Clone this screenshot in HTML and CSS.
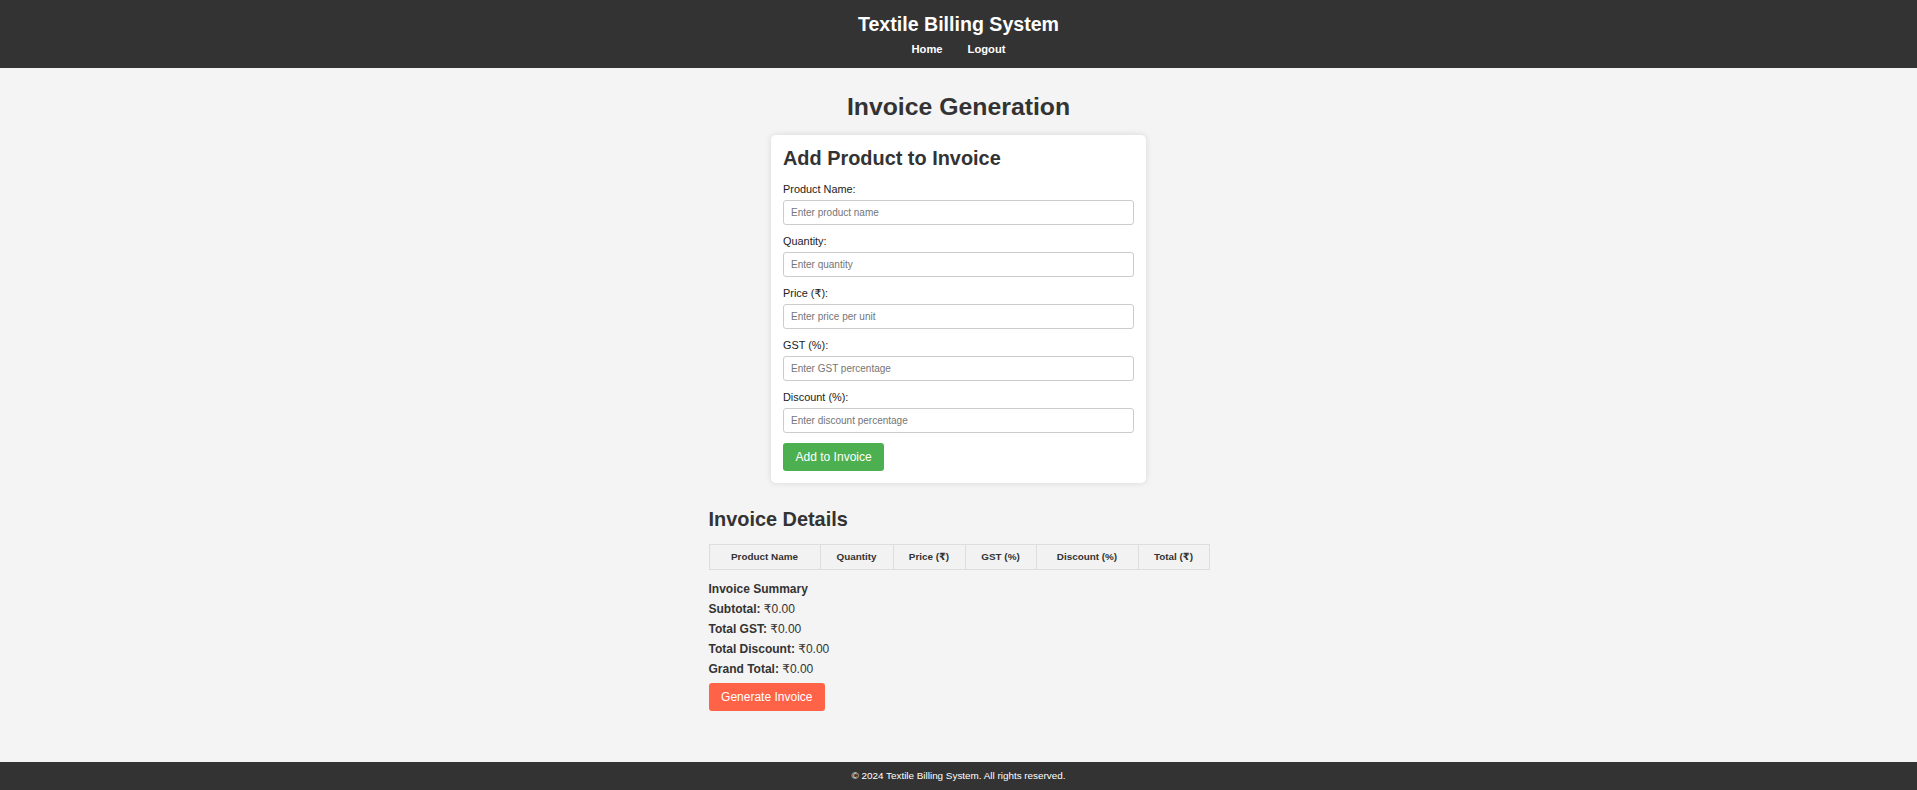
FILE: index.html
```html
<!DOCTYPE html>
<html lang="en">
<head>
<meta charset="UTF-8">
<title>Textile Billing System - Invoice</title>
<link rel="stylesheet" href="styles.css">
</head>
<body>
<header class="site-header">
  <h1 class="site-title">Textile Billing System</h1>
  <nav class="site-nav">
    <a href="#" class="nav-link">Home</a>
    <a href="#" class="nav-link">Logout</a>
  </nav>
</header>
<main class="main">
  <div class="container">
    <h1 class="page-title">Invoice Generation</h1>
    <div class="card">
      <h2 class="card-title">Add Product to Invoice</h2>
      <label class="field-label">Product Name:</label>
      <input class="field-input" type="text" placeholder="Enter product name">
      <label class="field-label">Quantity:</label>
      <input class="field-input" type="text" placeholder="Enter quantity">
      <label class="field-label">Price (₹):</label>
      <input class="field-input" type="text" placeholder="Enter price per unit">
      <label class="field-label">GST (%):</label>
      <input class="field-input" type="text" placeholder="Enter GST percentage">
      <label class="field-label">Discount (%):</label>
      <input class="field-input" type="text" placeholder="Enter discount percentage">
      <button class="btn btn-green">Add to Invoice</button>
    </div>

    <h2 class="section-title">Invoice Details</h2>
    <table class="invoice-table">
      <colgroup>
        <col class="col-name">
        <col class="col-qty">
        <col class="col-price">
        <col class="col-gst">
        <col class="col-disc">
        <col class="col-total">
      </colgroup>
      <thead>
        <tr>
          <th>Product Name</th>
          <th>Quantity</th>
          <th>Price (₹)</th>
          <th>GST (%)</th>
          <th>Discount (%)</th>
          <th>Total (₹)</th>
        </tr>
      </thead>
      <tbody></tbody>
    </table>

    <div class="summary">
      <div class="summary-title">Invoice Summary</div>
      <div class="summary-row"><strong>Subtotal:</strong> ₹0.00</div>
      <div class="summary-row"><strong>Total GST:</strong> ₹0.00</div>
      <div class="summary-row"><strong>Total Discount:</strong> ₹0.00</div>
      <div class="summary-row"><strong>Grand Total:</strong> ₹0.00</div>
      <button class="btn btn-tomato">Generate Invoice</button>
    </div>
  </div>
</main>
<footer class="site-footer">© 2024 Textile Billing System. All rights reserved.</footer>
</body>
</html>
```

FILE: styles.css
```css
* {
  box-sizing: border-box;
}

html, body {
  margin: 0;
  padding: 0;
}

body {
  font-family: "Liberation Sans", Arial, "DejaVu Sans", sans-serif;
  background: #f4f4f4;
  color: #333;
  min-height: 100vh;
  display: flex;
  flex-direction: column;
}

.site-header {
  background: #333;
  color: #fff;
  text-align: center;
  padding: 13px 0 12px;
  height: 68px;
}

.site-title {
  margin: 0;
  font-size: 19.6px;
  line-height: 23px;
  font-weight: bold;
}

.site-nav {
  margin-top: 7px;
  display: flex;
  justify-content: center;
  gap: 25px;
}

.nav-link {
  color: #fff;
  text-decoration: none;
  font-size: 11.2px;
  font-weight: bold;
  line-height: 13px;
}

.main {
  flex: 1;
}

.container {
  width: 500px;
  margin: 0 auto;
}

.page-title {
  text-align: center;
  margin: 24px 0 14px;
  font-size: 24.8px;
  line-height: 29px;
  font-weight: bold;
  color: #333;
}

.card {
  width: 375px;
  margin: 0 auto;
  background: #fff;
  padding: 12px;
  border-radius: 5px;
  box-shadow: 0 0 6px rgba(0, 0, 0, 0.12);
}

.card-title {
  margin: 0 0 13px;
  font-size: 19.9px;
  line-height: 23px;
  color: #333;
}

.field-label {
  display: block;
  font-size: 10.9px;
  line-height: 13px;
  margin-bottom: 4px;
  color: #222;
}

.field-input {
  display: block;
  width: 100%;
  height: 25px;
  padding: 0 7px;
  border: 1px solid #ccc;
  border-radius: 3px;
  font-family: "Liberation Sans", Arial, sans-serif;
  font-size: 10px;
  margin: 0 0 10px;
  background: #fff;
  color: #333;
}

.field-input::placeholder {
  color: #757575;
}

.btn {
  display: inline-block;
  border: none;
  border-radius: 3px;
  color: #fff;
  font-family: "Liberation Sans", Arial, "DejaVu Sans", sans-serif;
  font-size: 12px;
  line-height: 14px;
  padding: 7px 12.6px;
  height: 28px;
  cursor: pointer;
}

.btn-green {
  background: #4caf50;
}

.btn-tomato {
  background: #ff6347;
  margin-top: 4px;
}

.section-title {
  margin: 25px 0 13px;
  font-size: 19.9px;
  line-height: 23px;
  color: #333;
}

.invoice-table {
  width: 500px;
  border-collapse: collapse;
  table-layout: fixed;
}

.col-name { width: 111px; }
.col-qty { width: 73px; }
.col-price { width: 72px; }
.col-gst { width: 71px; }
.col-disc { width: 102px; }
.col-total { width: 71px; }

.invoice-table th {
  border: 1px solid #ddd;
  background: #f2f2f2;
  font-size: 9.9px;
  line-height: 12px;
  padding: 6px 4px;
  font-weight: bold;
  color: #333;
  text-align: center;
}

.summary {
  margin-top: 9px;
}

.summary-title {
  font-size: 12px;
  line-height: 20px;
  font-weight: bold;
}

.summary-row {
  font-size: 12px;
  line-height: 20px;
}

.summary-row strong {
  font-weight: bold;
}

.site-footer {
  background: #333;
  color: #fff;
  text-align: center;
  font-size: 9.9px;
  line-height: 12px;
  padding: 8px 0;
  height: 28px;
}
```
